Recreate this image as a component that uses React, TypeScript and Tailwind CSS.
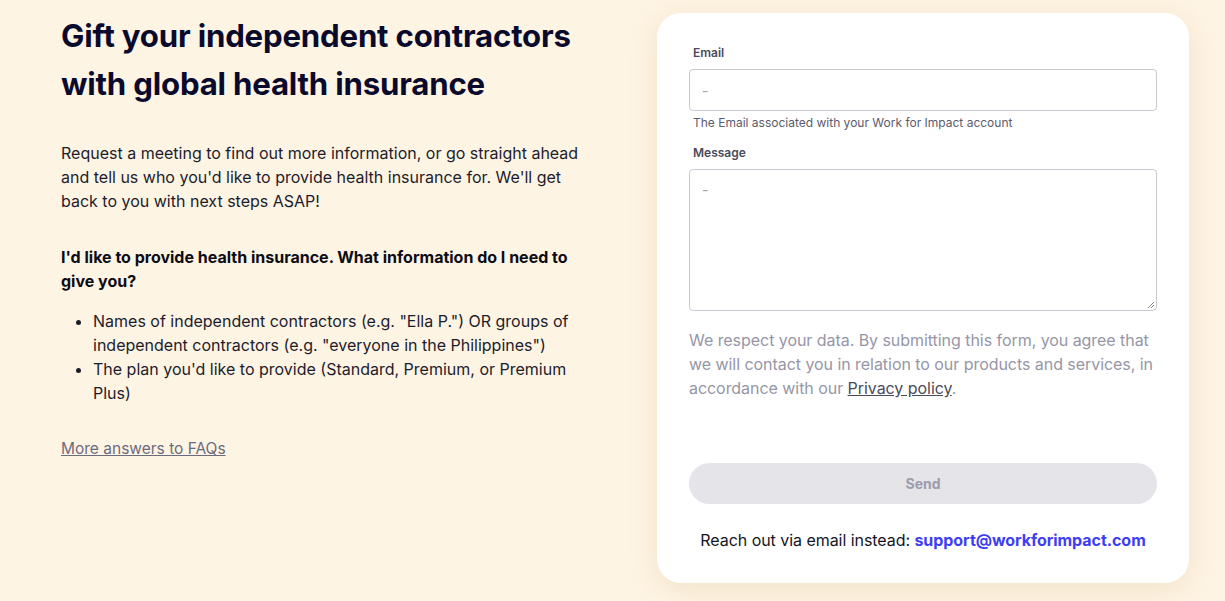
import React from 'react'

const App = () => {
  return (
    <div className="min-h-[601px] w-full bg-[#fef4e4] font-['Inter',sans-serif]">
      <div className="flex items-start pl-[61px] pt-[13px]">
        <div className="-mt-[1px] w-[525px]">
          <h1 className="text-[31.2px] font-bold leading-[48px] tracking-[-0.2px] text-[#0a0a2c]">
            Gift your independent contractors with global health insurance
          </h1>
          <p className="mt-[33px] text-[16px] leading-[24px] text-[#1c1c2b]">
            Request a meeting to find out more information, or go straight ahead and tell us who you'd like to provide health insurance for. We'll get back to you with next steps ASAP!
          </p>
          <p className="mt-[32px] text-[16px] font-bold leading-[24px] text-[#0c0c14]">
            I'd like to provide health insurance. What information do I need to give you?
          </p>
          <ul className="mt-[16px] list-disc pl-[32px] text-[16px] leading-[24px] text-[#1c1c2b]">
            <li>Names of independent contractors (e.g. "Ella P.") OR groups of independent contractors (e.g. "everyone in the Philippines")</li>
            <li>The plan you'd like to provide (Standard, Premium, or Premium Plus)</li>
          </ul>
          <a className="mt-[32px] inline-block text-[15.5px] leading-[24px] text-[#6b6b80] underline">
            More answers to FAQs
          </a>
        </div>

        <div className="ml-[71px] w-[532px] rounded-[24px] bg-white px-[32px] pt-[32px] pb-[31px] shadow-[0_6px_28px_rgba(190,150,90,0.2)]">
          <label className="block pl-[4px] text-[12px] font-semibold leading-[16px] text-[#4a4a5a]">Email</label>
          <div className="mt-[8px] flex h-[42px] items-center rounded-[4px] border border-[#c9c8d2] px-[12px] text-[14px] text-[#a0a0ac]">
            -
          </div>
          <p className="mt-[4px] pl-[4px] text-[12px] leading-[16px] text-[#5b5b6b]">
            The Email associated with your Work for Impact account
          </p>
          <label className="mt-[14px] block pl-[4px] text-[12px] font-semibold leading-[16px] text-[#4a4a5a]">Message</label>
          <div className="relative mt-[8px] h-[142px] rounded-[4px] border border-[#c9c8d2] px-[12px] pt-[10px] text-[14px] leading-[20px] text-[#a0a0ac]">
            -
            <svg className="absolute right-[1px] bottom-[1px]" width="9" height="9" viewBox="0 0 9 9">
              <path d="M8 2 L2 8 M8 5 L5 8" stroke="#8a8a8a" strokeWidth="1" />
            </svg>
          </div>
          <p className="-mr-[6px] mt-[17px] text-[16px] leading-[24px] tracking-[-0.05px] text-[#9696a6]">
            We respect your data. By submitting this form, you agree that we will contact you in relation to our products and services, in accordance with our{' '}
            <a className="text-[#4a4a5a] underline">Privacy policy</a>.
          </p>
          <button className="mt-[63px] flex h-[41px] w-full items-center justify-center rounded-full bg-[#e4e4e9] text-[14px] font-bold text-[#9c9cab]">
            Send
          </button>
          <p className="mt-[24px] text-center text-[16px] leading-[24px] tracking-[-0.05px] text-[#15151f]">
            Reach out via email instead:{' '}
            <a className="font-bold text-[#3d3df5]">support@workforimpact.com</a>
          </p>
        </div>
      </div>
    </div>
  )
}

export default App
